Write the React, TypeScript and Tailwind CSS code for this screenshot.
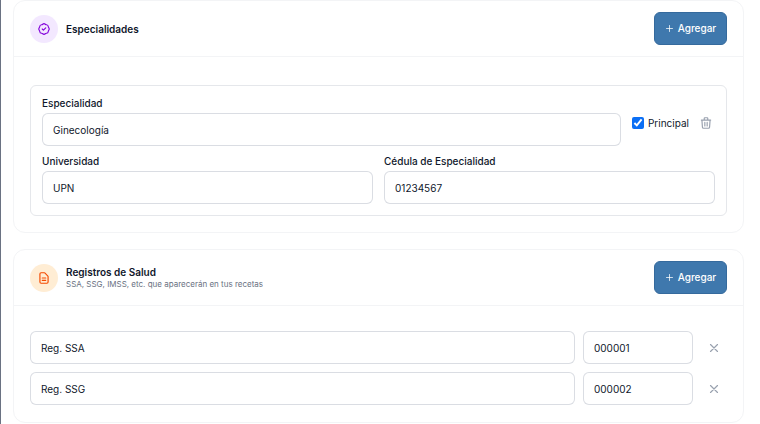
import { useState } from "react";
import type { ReactNode } from "react";
import { HiOutlineBadgeCheck, HiOutlineDocumentText, HiOutlinePlus, HiOutlineTrash, HiOutlineX } from "react-icons/hi";

interface SectionCardProps {
  title: string;
  description?: string;
  icon: ReactNode;
  iconClass: string;
  onAdd: () => void;
  children: ReactNode;
}

interface FieldProps {
  id: string;
  label: string;
  value: string;
  onChange: (value: string) => void;
}

const inputClass =
  "block h-[33px] w-full min-w-0 rounded-md border border-gray-300/80 bg-white px-[10px] text-[10px] text-slate-900 outline-none focus:border-[#3f78ad]";

function SectionCard({ title, description, icon, iconClass, onAdd, children }: SectionCardProps) {
  return (
    <section className="rounded-xl border border-gray-100 bg-white">
      <header className="flex items-center justify-between border-b border-gray-100 px-4 py-[11px]">
        <div className="flex items-center gap-2">
          <div className={`flex size-7 items-center justify-center rounded-full ${iconClass}`}>{icon}</div>
          <div>
            <h2 className="text-[10px] leading-3 font-semibold text-slate-900">{title}</h2>
            {description && <p className="text-[8px] leading-3 text-gray-500">{description}</p>}
          </div>
        </div>
        <button
          type="button"
          onClick={onAdd}
          className="flex h-[33px] w-[73px] items-center justify-center gap-1 rounded-md border border-[#356a9d] bg-[#3f78ad] text-[10px] font-medium text-white"
        >
          <HiOutlinePlus size={9} />
          Agregar
        </button>
      </header>
      {children}
    </section>
  );
}

function Field({ id, label, value, onChange }: FieldProps) {
  return (
    <div className="min-w-0 flex-1">
      <label htmlFor={id} className="block h-4 text-[10px] leading-3 font-medium text-slate-900">
        {label}
      </label>
      <input id={id} className={inputClass} value={value} onChange={(e) => onChange(e.target.value)} />
    </div>
  );
}

export default function App() {
  const [specialties, setSpecialties] = useState([
    { name: "Ginecología", university: "UPN", license: "01234567", main: true },
  ]);
  const [records, setRecords] = useState([
    { name: "Reg. SSA", number: "000001" },
    { name: "Reg. SSG", number: "000002" },
  ]);

  const updateSpecialty = (index: number, patch: object) =>
    setSpecialties(specialties.map((s, i) => (i === index ? { ...s, ...patch } : s)));

  const updateRecord = (index: number, patch: object) =>
    setRecords(records.map((r, i) => (i === index ? { ...r, ...patch } : r)));

  return (
    <main className="flex min-h-screen flex-col gap-4 border-l border-gray-500 bg-white pr-4 pl-3 font-['Inter','Liberation_Sans',sans-serif]">
      <SectionCard
        title="Especialidades"
        icon={<HiOutlineBadgeCheck size={14} />}
        iconClass="bg-purple-100 text-purple-700"
        onAdd={() => setSpecialties([...specialties, { name: "", university: "", license: "", main: false }])}
      >
        <div className="flex flex-col gap-2 px-4 pt-7 pb-4">
          {specialties.map((item, index) => (
            <div key={index} className="flex flex-col gap-[9px] rounded-md border border-gray-200 p-[11px]">
              <div className="flex items-start gap-[11px]">
                <Field
                  id={`specialty-${index}`}
                  label="Especialidad"
                  value={item.name}
                  onChange={(name) => updateSpecialty(index, { name })}
                />
                <div className="flex items-center gap-2 pt-4">
                  <label className="flex h-5 items-center gap-1 text-[10px] text-slate-900">
                    <input
                      type="checkbox"
                      className="size-3 accent-[#0b6ff5]"
                      checked={item.main}
                      onChange={(e) => updateSpecialty(index, { main: e.target.checked })}
                    />
                    Principal
                  </label>
                  <button
                    type="button"
                    aria-label="Eliminar especialidad"
                    onClick={() => setSpecialties(specialties.filter((_, i) => i !== index))}
                    className="flex h-5 w-[18px] items-center justify-center text-gray-400"
                  >
                    <HiOutlineTrash size={14} />
                  </button>
                </div>
              </div>
              <div className="grid grid-cols-2 gap-[11px]">
                <Field
                  id={`university-${index}`}
                  label="Universidad"
                  value={item.university}
                  onChange={(university) => updateSpecialty(index, { university })}
                />
                <Field
                  id={`license-${index}`}
                  label="Cédula de Especialidad"
                  value={item.license}
                  onChange={(license) => updateSpecialty(index, { license })}
                />
              </div>
            </div>
          ))}
        </div>
      </SectionCard>

      <SectionCard
        title="Registros de Salud"
        description="SSA, SSG, IMSS, etc. que aparecerán en tus recetas"
        icon={<HiOutlineDocumentText size={14} />}
        iconClass="bg-orange-100 text-orange-600"
        onAdd={() => setRecords([...records, { name: "", number: "" }])}
      >
        <div className="flex flex-col gap-2 px-4 pt-[25px] pb-[17px]">
          {records.map((record, index) => (
            <div key={index} className="flex items-center gap-2">
              <div className="min-w-0 flex-1">
                <input
                  aria-label="Nombre del registro"
                  className={inputClass}
                  value={record.name}
                  onChange={(e) => updateRecord(index, { name: e.target.value })}
                />
              </div>
              <div className="w-[110px]">
                <input
                  aria-label="Número de registro"
                  className={inputClass}
                  value={record.number}
                  onChange={(e) => updateRecord(index, { number: e.target.value })}
                />
              </div>
              <button
                type="button"
                aria-label="Eliminar registro"
                onClick={() => setRecords(records.filter((_, i) => i !== index))}
                className="flex h-6 w-[26px] items-center justify-center text-gray-400"
              >
                <HiOutlineX size={14} />
              </button>
            </div>
          ))}
        </div>
      </SectionCard>
    </main>
  );
}
